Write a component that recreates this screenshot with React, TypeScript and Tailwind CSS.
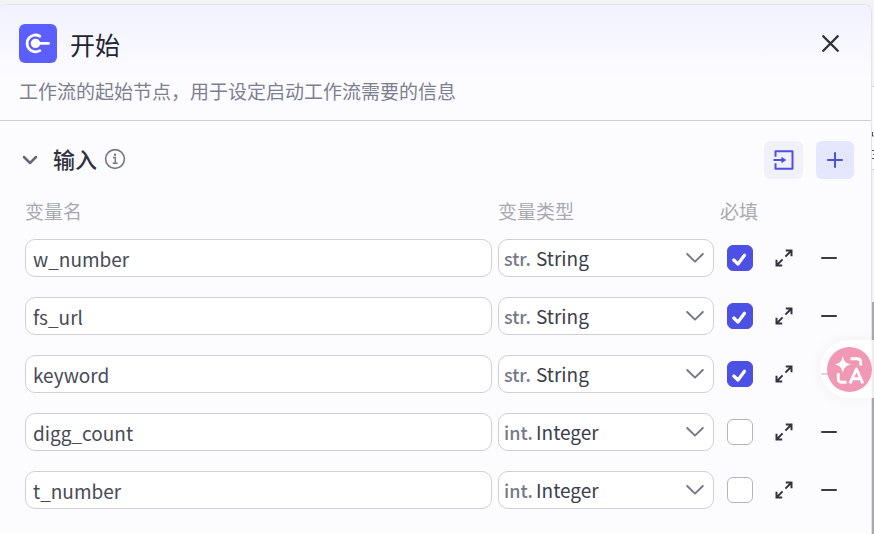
import React, { useState } from 'react';
import { X, Plus, Minus } from 'lucide-react';

type VariableType = 'String' | 'Integer';

interface Variable {
  id: number;
  name: string;
  type: VariableType;
  required: boolean;
}

const initialVariables: Variable[] = [
  { id: 1, name: 'w_number', type: 'String', required: true },
  { id: 2, name: 'fs_url', type: 'String', required: true },
  { id: 3, name: 'keyword', type: 'String', required: true },
  { id: 4, name: 'digg_count', type: 'Integer', required: false },
  { id: 5, name: 't_number', type: 'Integer', required: false },
];

const typePrefix: Record<VariableType, string> = {
  String: 'str.',
  Integer: 'int.',
};

const StartIcon = () => (
  <svg viewBox="0 0 38 39" className="w-full h-full" fill="none" aria-hidden="true">
    <path d="M20.8 12.2A8.4 8.4 0 1 0 20.8 26.6" stroke="#fff" strokeWidth="2.8" strokeLinecap="round" />
    <circle cx="16.5" cy="19.4" r="4.7" fill="#fff" />
    <path d="M17 19.4H29.5" stroke="#fff" strokeWidth="2.8" strokeLinecap="round" />
  </svg>
);

const InfoIcon = () => (
  <svg viewBox="0 0 22 22" className="w-[22px] h-[22px]" fill="none" stroke="currentColor" aria-hidden="true">
    <circle cx="11" cy="11" r="9.4" strokeWidth="1.6" />
    <path d="M9 9.6H11.3V15M8.7 15.2H13.6" strokeWidth="1.5" />
    <circle cx="11" cy="6.7" r="1.2" fill="currentColor" stroke="none" />
  </svg>
);

const ImportIcon = () => (
  <svg viewBox="0 0 22 22" className="w-[22px] h-[22px]" fill="none" stroke="currentColor" aria-hidden="true">
    <path d="M2.5 7.8V2.2H19.5V19.8H2.5V14.2" strokeWidth="2" strokeLinejoin="round" />
    <path d="M0.5 11H10" strokeWidth="2" />
    <path d="M8.8 8.4L12.8 11L8.8 13.6Z" fill="currentColor" strokeWidth="0.8" />
  </svg>
);

const ExpandIcon = () => (
  <svg viewBox="0 0 18 18" className="w-[18px] h-[18px]" fill="none" stroke="currentColor" strokeWidth="2" aria-hidden="true">
    <path d="M10.8 1.5H16.5V7.2M16.2 1.8L10.4 7.6" />
    <path d="M7.2 16.5H1.5V10.8M1.8 16.2L7.6 10.4" />
  </svg>
);

const ChevronIcon = () => (
  <svg viewBox="0 0 18 10" className="w-[18px] h-[10px] pointer-events-none shrink-0" fill="none" stroke="currentColor" aria-hidden="true">
    <path d="M1.2 1L9 8.6L16.8 1" strokeWidth="1.9" strokeLinecap="round" strokeLinejoin="round" />
  </svg>
);

const TranslateIcon = () => (
  <svg viewBox="0 0 44 44" className="w-[45px] h-[45px]" fill="none" aria-hidden="true">
    <path d="M15.5 8.5C16.5 14 18.3 15.8 23.5 17C18.3 18.2 16.5 20 15.5 25.5C14.5 20 12.7 18.2 7.5 17C12.7 15.8 14.5 14 15.5 8.5Z" fill="#fff" />
    <path d="M23 11.5H29.5Q33 11.5 33 15V18" stroke="#fff" strokeWidth="2.8" />
    <path d="M11 25.5V30.5Q11 34.5 15 34.5H19" stroke="#fff" strokeWidth="2.8" />
    <path d="M22.5 35.5L28.8 21.5L35 35.5M25 31H33" stroke="#fff" strokeWidth="2.8" strokeLinejoin="round" />
  </svg>
);

interface VariableRowProps {
  variable: Variable;
  onChange: (patch: Partial<Variable>) => void;
  onRemove: () => void;
}

const VariableRow: React.FC<VariableRowProps> = ({ variable, onChange, onRemove }) => {
  return (
    <div className="grid grid-cols-[minmax(0,1fr)_216px_40px_36px_42px] gap-x-1.5 items-center">
      <input
        type="text"
        aria-label="变量名"
        value={variable.name}
        onChange={(e) => onChange({ name: e.target.value })}
        className="h-[38px] w-full rounded-[10px] border border-[#cfcfd8] bg-white px-[7px] text-[19px] text-[#484a55] outline-none focus:border-[#4d53e8]"
      />

      <label className="flex h-[38px] items-center rounded-[10px] border border-[#cfcfd8] bg-white pl-[5px] pr-[9px] text-[#757887]">
        <span className="w-8 text-[18px] font-medium">{typePrefix[variable.type]}</span>
        <select
          aria-label="变量类型"
          value={variable.type}
          onChange={(e) => onChange({ type: e.target.value as VariableType })}
          className="min-w-0 flex-1 appearance-none bg-transparent text-[19px] text-[#3c3e4b] outline-none"
        >
          <option value="String">String</option>
          <option value="Integer">Integer</option>
        </select>
        <ChevronIcon />
      </label>

      <div className="grid place-items-center">
        <input
          type="checkbox"
          aria-label="必填"
          checked={variable.required}
          onChange={(e) => onChange({ required: e.target.checked })}
          className="peer col-start-1 row-start-1 w-[26px] h-[26px] appearance-none rounded-md border border-[#b4b4c4] bg-white checked:border-[#4d50e4] checked:bg-[#4d50e4]"
        />
        <svg viewBox="0 0 26 26" className="pointer-events-none invisible peer-checked:visible col-start-1 row-start-1 w-[26px] h-[26px]" fill="none" aria-hidden="true">
          <path d="M6.8 15L11 19L17.5 10.2" stroke="#fff" strokeWidth="3.2" strokeLinecap="round" strokeLinejoin="round" />
        </svg>
      </div>

      <button type="button" title="展开" className="grid h-8 place-items-center rounded-md text-[#34343f] hover:bg-[#f1f1fa]">
        <ExpandIcon />
      </button>
      <button type="button" title="删除" onClick={onRemove} className="grid h-8 place-items-center rounded-md text-[#3a3a46] hover:bg-[#f1f1fa]">
        <Minus className="w-6 h-6" strokeWidth={2} />
      </button>
    </div>
  );
};

const App: React.FC = () => {
  const [variables, setVariables] = useState<Variable[]>(initialVariables);

  const updateVariable = (id: number, patch: Partial<Variable>) => {
    setVariables((prev) => prev.map((v) => (v.id === id ? { ...v, ...patch } : v)));
  };

  const addVariable = () => {
    setVariables((prev) => [...prev, { id: Date.now(), name: '', type: 'String', required: false }]);
  };

  return (
    <div className="relative flex min-h-screen overflow-hidden bg-[#f3f3f5] pt-1 font-['Noto_Sans_CJK_SC',sans-serif]">
      <main className="min-w-0 flex-1 rounded-t-lg border-t border-r border-[#e4e4ee] bg-[#fcfcff]">
        {/* Header */}
        <header className="rounded-t-lg border-b border-[#cdced4] bg-linear-to-b from-[#f2f2ff] to-[#fcfcff] to-65% pl-[19px] pr-[26px] pt-[19px] pb-[15px]">
          <div className="flex items-center">
            <div className="w-[38px] h-[39px] rounded-md bg-[#5b5fff]">
              <StartIcon />
            </div>
            <h1 className="ml-[13px] flex-1 text-[25px] leading-[38px] text-[#24252f]">开始</h1>
            <button type="button" title="关闭" className="text-[#30313d]">
              <X className="w-[29px] h-[29px]" strokeWidth={2} />
            </button>
          </div>
          <p className="mt-3.5 text-[19px] leading-7 text-[#7d7f90]">工作流的起始节点，用于设定启动工作流需要的信息</p>
        </header>

        {/* Inputs */}
        <section className="pl-[25px] pr-[21px] pt-5">
          <div className="flex items-center">
            <button type="button" title="收起" className="-ml-1 text-[#666878]">
              <svg viewBox="0 0 18 18" className="w-[18px] h-[18px]" fill="none" stroke="currentColor" aria-hidden="true">
                <path d="M3 6L9 12L15 6" strokeWidth="2.5" strokeLinecap="round" strokeLinejoin="round" />
              </svg>
            </button>
            <h2 className="ml-3.5 pb-1 text-[22px] leading-[30px] font-medium text-[#30313d]">输入</h2>
            <span className="ml-[7px] flex-1 pb-0.5 text-[#757887]">
              <InfoIcon />
            </span>
            <div className="-mr-1 flex gap-[13px]">
              <button type="button" title="导入" className="grid w-[39px] h-[38px] place-items-center rounded-md bg-[#f1f1fa] text-[#4d50e4]">
                <ImportIcon />
              </button>
              <button type="button" title="新增" onClick={addVariable} className="grid w-[38px] h-[38px] place-items-center rounded-md bg-[#e5e6ff] text-[#4d50e4]">
                <Plus className="w-6 h-6" strokeWidth={2} />
              </button>
            </div>
          </div>

          <div className="mt-[18px] grid grid-cols-[minmax(0,1fr)_216px_40px_36px_42px] gap-x-1.5 text-[19px] leading-7 text-[#a9a9b0]">
            <span>变量名</span>
            <span>变量类型</span>
            <span className="whitespace-nowrap">必填</span>
          </div>

          <div className="mt-3.5 flex flex-col gap-5">
            {variables.map((variable) => (
              <VariableRow
                key={variable.id}
                variable={variable}
                onChange={(patch) => updateVariable(variable.id, patch)}
                onRemove={() => setVariables((prev) => prev.filter((v) => v.id !== variable.id))}
              />
            ))}
          </div>
        </section>
      </main>

      {/* Canvas edge and page scrollbar */}
      <aside className="flex w-0.5 flex-col">
        <div className="mt-[82px] h-[84px] border-y border-[#d5d5dc] bg-[#fafaff] pt-[45px]">
          <svg viewBox="0 0 2 28" className="w-0.5 h-7" fill="none" stroke="#50525f" aria-hidden="true">
            <path d="M0.5 0V4H2M0 18.5H2M1 22.5H2M0 26.5H2" />
          </svg>
        </div>
        <div className="mt-[132px] flex-1 bg-[#a9a9ab]" />
      </aside>

      {/* Floating translate button */}
      <div className="absolute right-0 top-[340px] flex h-[58px] w-[54px] items-center rounded-l-full bg-white/80 pl-[7px] shadow-[0_0_16px_rgba(0,0,0,0.05)]">
        <button type="button" title="翻译" className="shrink-0 rounded-full bg-[#f093b0]/95">
          <TranslateIcon />
        </button>
      </div>
    </div>
  );
};

export default App;
